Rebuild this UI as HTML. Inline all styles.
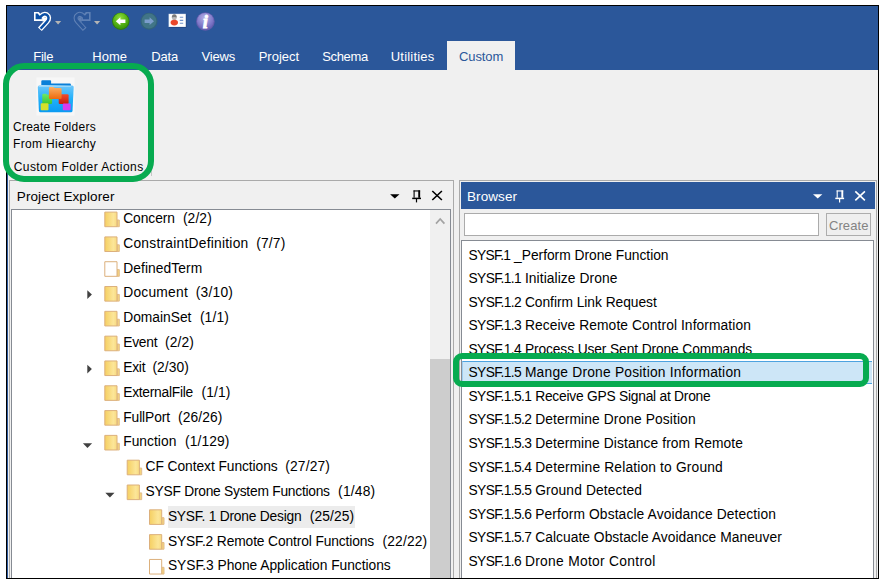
<!DOCTYPE html>
<html><head><meta charset="utf-8"><title>Custom Folder Actions</title>
<style>
html,body{margin:0;padding:0;background:#fff;}
body{width:888px;height:585px;position:relative;overflow:hidden;font-family:"Liberation Sans",sans-serif;}
.a{position:absolute;}
.t{position:absolute;white-space:nowrap;line-height:0;font-family:"Liberation Sans",sans-serif;}
.s{display:inline-block;width:0;height:20px;}
.sp{font-size:0;letter-spacing:0;}
svg{position:absolute;left:0;top:0;}
</style></head><body>
<!-- window frame -->
<div class="a" style="left:6px;top:5px;width:873px;height:574px;box-sizing:border-box;border:1px solid #000;background:#f0f0f0"></div>
<div class="a" style="left:7px;top:6px;width:871px;height:64px;background:#2b579a"></div>
<div class="a" style="left:7px;top:70px;width:1px;height:508px;background:#2b579a"></div>
<!-- custom tab -->
<div class="a" style="left:447px;top:41px;width:68px;height:29px;background:#f0f0f0"></div>
<!-- project explorer panel -->
<div class="a" style="left:9px;top:180px;width:445px;height:398px;box-sizing:border-box;border:1px solid #aaaaaa;border-bottom:none;background:#f0f0f0"></div>
<div class="a" style="left:11px;top:209px;width:440px;height:369px;box-sizing:border-box;border:1px solid #868b93;border-bottom:none;background:#fff"></div>
<div class="a" style="left:430px;top:210px;width:20px;height:368px;background:#f0f0f0"></div>
<div class="a" style="left:430px;top:359px;width:20px;height:219px;background:#cdcdcd"></div>
<!-- browser panel -->
<div class="a" style="left:459px;top:180px;width:418px;height:398px;box-sizing:border-box;border:1px solid #aaaaaa;border-bottom:none;background:#f0f0f0"></div>
<div class="a" style="left:461px;top:182px;width:414px;height:27px;background:#2b579a"></div>
<div class="a" style="left:464px;top:213px;width:355px;height:23px;box-sizing:border-box;border:1px solid #ababab;background:#fff"></div>
<div class="a" style="left:826px;top:213px;width:45px;height:23px;box-sizing:border-box;border:1px solid #adadad;background:#efefef"></div>
<div class="a" style="left:461px;top:240px;width:413px;height:338px;box-sizing:border-box;border:1px solid #868b93;border-bottom:none;background:#fff"></div>
<!-- selected list row -->
<div class="a" style="left:462px;top:361px;width:410px;height:23px;box-sizing:border-box;border:1px solid #4da3e0;border-left-color:#9ccdf0;border-right:none;background:#cde6f7"></div>
<div class="a" style="left:168px;top:506px;width:187px;height:22px;background:#ececec"></div>
<svg width="888" height="585" viewBox="0 0 888 585">
<defs>
<linearGradient id="fg" x1="0" y1="0" x2="1" y2="0"><stop offset="0" stop-color="#f5cf62"/><stop offset="0.7" stop-color="#fce699"/><stop offset="1" stop-color="#f8da80"/></linearGradient>
<radialGradient id="gg" cx="0.45" cy="0.3" r="0.8"><stop offset="0" stop-color="#8fdc3a"/><stop offset="0.6" stop-color="#4fae12"/><stop offset="1" stop-color="#2f8a0a"/></radialGradient>
<radialGradient id="pg" cx="0.45" cy="0.3" r="0.8"><stop offset="0" stop-color="#b5b0e6"/><stop offset="0.6" stop-color="#7f78c8"/><stop offset="1" stop-color="#5a54a8"/></radialGradient>
<linearGradient id="bf" x1="0" y1="0" x2="0" y2="1"><stop offset="0" stop-color="#6cc6fb"/><stop offset="0.5" stop-color="#22b0fa"/><stop offset="1" stop-color="#0a9bf2"/></linearGradient>
<linearGradient id="gf" x1="0" y1="0" x2="0" y2="1"><stop offset="0" stop-color="#6ee868"/><stop offset="1" stop-color="#3cc634"/></linearGradient>
<linearGradient id="rf" x1="0" y1="0" x2="0" y2="1"><stop offset="0" stop-color="#f24e2c"/><stop offset="1" stop-color="#c81d10"/></linearGradient>
<linearGradient id="of" x1="0" y1="0" x2="0" y2="1"><stop offset="0" stop-color="#fbb066"/><stop offset="1" stop-color="#ee6a0e"/></linearGradient>
</defs>
<g><path d="M39.9 29.35 L47.0 21.6 C49.2 19.2 49.0 16.2 46.8 14.9 C44.8 13.8 42.6 14.6 41.0 16.4" fill="none" stroke="#ffffff" stroke-width="5.2" stroke-linecap="butt" stroke-linejoin="round"/><path d="M34.0 12.0 L38.7 12.0 L42.9 16.8 L42.9 20.9 L34.0 20.9 Z" fill="#ffffff"/><path d="M43.0 17.0 L46.4 17.4 L45.6 20.4 L42.6 21.8 Z" fill="#ffffff"/><path d="M40.6 28.6 L47.0 21.6 C49.2 19.2 49.0 16.2 46.8 14.9 C44.8 13.8 42.6 14.6 41.0 16.4 L40.2 17.4" fill="none" stroke="#0a4fa6" stroke-width="2.5" stroke-linecap="butt" stroke-linejoin="round"/><path d="M35.6 13.4 L37.6 13.4 L41.7 18.0 L41.7 19.3 L35.6 19.3 Z" fill="#0a4fa6"/></g>
<path d="M55 20.9 h6.2 l-3.1 3.6 z" fill="#b4b4b4"/>
<g opacity="0.33" transform="translate(124.6,0) scale(-1,1)"><path d="M39.9 29.35 L47.0 21.6 C49.2 19.2 49.0 16.2 46.8 14.9 C44.8 13.8 42.6 14.6 41.0 16.4" fill="none" stroke="#c9d6ec" stroke-width="5.0" stroke-linecap="butt" stroke-linejoin="round"/><path d="M34.0 12.0 L38.7 12.0 L42.9 16.8 L42.9 20.9 L34.0 20.9 Z" fill="#c9d6ec"/><path d="M43.0 17.0 L46.4 17.4 L45.6 20.4 L42.6 21.8 Z" fill="#c9d6ec"/><path d="M40.6 28.6 L47.0 21.6 C49.2 19.2 49.0 16.2 46.8 14.9 C44.8 13.8 42.6 14.6 41.0 16.4 L40.2 17.4" fill="none" stroke="#2b579a" stroke-width="2.9" stroke-linecap="butt" stroke-linejoin="round"/><path d="M35.6 13.4 L37.6 13.4 L41.7 18.0 L41.7 19.3 L35.6 19.3 Z" fill="#2b579a"/></g>
<path d="M94 20.9 h6.2 l-3.1 3.6 z" fill="#b4b4b4"/>
<circle cx="120.8" cy="21.2" r="8.7" fill="#2e7d0c"/>
<circle cx="120.8" cy="21.0" r="7.9" fill="url(#gg)"/>
<path d="M115.8 21.2 l4.6-4 v2.3 h5.0 v3.4 h-5.0 v2.3 z" fill="#fff"/>
<circle cx="149" cy="21.2" r="8.5" fill="#33637a"/>
<circle cx="149" cy="21.0" r="7.4" fill="#417587"/>
<path d="M154 21.2 l-4.4-3.9 v2.2 h-5.0 v3.4 h5.0 v2.2 z" fill="#7b9dcc"/>
<rect x="169.4" y="14.6" width="17.0" height="13.0" fill="#1f3f78"/><rect x="168.6" y="13.8" width="17.2" height="13.2" fill="#dfe5ee"/>
<rect x="169.1" y="14.3" width="16.2" height="12.0" fill="#fdfdfd"/>
<circle cx="174.3" cy="17.9" r="2.4" fill="#b9b9b9"/><path d="M171.7 17.6 q0.2-3.4 2.6-3.4 q2.4 0 2.6 3.4 q-2.6-1.2-5.2 0 z" fill="#7a7a7a"/><ellipse cx="174.3" cy="22.6" rx="3.7" ry="2.8" fill="#e8472b"/>
<path d="M179.8 17.2 h3.4 M179.8 20.4 h3.4 M179.8 23.2 h3.4" stroke="#6f93cc" stroke-width="1.1"/>
<circle cx="205.4" cy="21.5" r="9.3" fill="#625bab"/>
<circle cx="205.4" cy="21.3" r="8.4" fill="url(#pg)"/>
<text x="205.3" y="27.8" font-family="Liberation Serif, serif" font-style="italic" font-weight="bold" font-size="18.5" fill="#fff" stroke="#fff" stroke-width="0.8" text-anchor="middle">i</text>
<rect x="36.5" y="77.5" width="38" height="38" fill="#f7f7f7"/>
<path d="M41.3 85 v-3.8 q0-1 1-1 h7.8 q1 0 1 1 v2.4 h18.8 q1 0 1 1 v1.4 z" fill="#0a7fd8"/>
<path d="M37.8 87 q0-1.5 1.5-1.5 h32.9 q1.5 0 1.5 1.5 l-1.2 23.7 q-0.1 1.5-1.6 1.5 h-30.4 q-1.5 0-1.6-1.5 z" fill="url(#bf)"/>
<path d="M38.6 86.3 h32.3" stroke="#a9defc" stroke-width="0.9"/>
<path d="M42.3 95 q0-1.3 1.3-1.3 h2.6 l0.9 1 h3.8 q1.2 0 1.2 1.2 v6.9 q0 1.2-1.2 1.2 h-7.4 q-1.2 0-1.2-1.2 z" fill="url(#gf)"/>
<rect x="58.7" y="94.2" width="9.9" height="9.8" rx="1.1" fill="url(#rf)"/>
<path d="M48.9 88.2 q0-1.3 1.3-1.3 h3.3 l1 1.2 h5.9 q1.2 0 1.2 1.2 v8.5 q0 1.2-1.2 1.2 h-10.3 q-1.2 0-1.2-1.2 z" fill="url(#of)"/>
<rect x="40.7" y="103.2" width="7.8" height="7" rx="0.9" fill="#d4e02c"/>
<rect x="62.8" y="103.6" width="7.8" height="6.6" rx="0.9" fill="#d83cf2"/>
<path d="M390.1 194.3 h9.4 l-4.7 4.1 z" fill="#000"/>
<path d="M413.5 190.95 h6.6" stroke="#000" stroke-width="1.1" fill="none"/><path d="M414.1 190.40 v7.4" stroke="#000" stroke-width="1.1" fill="none"/><path d="M419.2 190.40 v7.4" stroke="#000" stroke-width="1.9" fill="none"/><path d="M412.2 198.40 h8.8" stroke="#000" stroke-width="1.5" fill="none"/><path d="M416.5 199.00 v3.4" stroke="#000" stroke-width="1.2" fill="none"/>
<path d="M432.3 191.0 l9.6 9.0 M441.9 191.0 l-9.6 9.0" stroke="#000" stroke-width="1.6" fill="none"/>
<path d="M436 223.6 l4.2-4.6 l4.2 4.6" stroke="#a3a3a3" stroke-width="1.7" fill="none"/>
<path d="M813.0 194.3 h9.4 l-4.7 4.1 z" fill="#fff"/>
<path d="M836.6 190.95 h6.6" stroke="#fff" stroke-width="1.1" fill="none"/><path d="M837.2 190.40 v7.4" stroke="#fff" stroke-width="1.1" fill="none"/><path d="M842.3 190.40 v7.4" stroke="#fff" stroke-width="1.9" fill="none"/><path d="M835.3 198.40 h8.8" stroke="#fff" stroke-width="1.5" fill="none"/><path d="M839.6 199.00 v3.4" stroke="#fff" stroke-width="1.2" fill="none"/>
<path d="M855.3 191.3 l9.6 9.0 M864.9 191.3 l-9.6 9.0" stroke="#fff" stroke-width="1.6" fill="none"/>
<path d="M117.00 220.00 h2.3 v6.7 h-2.3 z" fill="#f5d47c" stroke="#e2bd8c" stroke-width="1"/><path d="M104.80 212.10 h12.2 v14.6 h-12.2 z" fill="url(#fg)" stroke="#dcb07c" stroke-width="1"/><path d="M117.00 244.81 h2.3 v6.7 h-2.3 z" fill="#f5d47c" stroke="#e2bd8c" stroke-width="1"/><path d="M104.80 236.91 h12.2 v14.6 h-12.2 z" fill="url(#fg)" stroke="#dcb07c" stroke-width="1"/><path d="M117.00 269.62 h2.3 v6.7 h-2.3 z" fill="#f5d47c" stroke="#e2bd8c" stroke-width="1"/><path d="M104.80 261.72 h12.2 v14.6 h-12.2 z" fill="#fff" stroke="#dcb07c" stroke-width="1"/><path d="M117.00 294.43 h2.3 v6.7 h-2.3 z" fill="#f5d47c" stroke="#e2bd8c" stroke-width="1"/><path d="M104.80 286.53 h12.2 v14.6 h-12.2 z" fill="url(#fg)" stroke="#dcb07c" stroke-width="1"/><path d="M87.3 290.2 l4.6 4.4 l-4.6 4.4 z" fill="#404040"/><path d="M117.00 319.24 h2.3 v6.7 h-2.3 z" fill="#f5d47c" stroke="#e2bd8c" stroke-width="1"/><path d="M104.80 311.34 h12.2 v14.6 h-12.2 z" fill="url(#fg)" stroke="#dcb07c" stroke-width="1"/><path d="M117.00 344.05 h2.3 v6.7 h-2.3 z" fill="#f5d47c" stroke="#e2bd8c" stroke-width="1"/><path d="M104.80 336.15 h12.2 v14.6 h-12.2 z" fill="url(#fg)" stroke="#dcb07c" stroke-width="1"/><path d="M117.00 368.86 h2.3 v6.7 h-2.3 z" fill="#f5d47c" stroke="#e2bd8c" stroke-width="1"/><path d="M104.80 360.96 h12.2 v14.6 h-12.2 z" fill="url(#fg)" stroke="#dcb07c" stroke-width="1"/><path d="M87.3 364.7 l4.6 4.4 l-4.6 4.4 z" fill="#404040"/><path d="M117.00 393.67 h2.3 v6.7 h-2.3 z" fill="#f5d47c" stroke="#e2bd8c" stroke-width="1"/><path d="M104.80 385.77 h12.2 v14.6 h-12.2 z" fill="url(#fg)" stroke="#dcb07c" stroke-width="1"/><path d="M117.00 418.48 h2.3 v6.7 h-2.3 z" fill="#f5d47c" stroke="#e2bd8c" stroke-width="1"/><path d="M104.80 410.58 h12.2 v14.6 h-12.2 z" fill="url(#fg)" stroke="#dcb07c" stroke-width="1"/><path d="M117.00 443.29 h2.3 v6.7 h-2.3 z" fill="#f5d47c" stroke="#e2bd8c" stroke-width="1"/><path d="M104.80 435.39 h12.2 v14.6 h-12.2 z" fill="url(#fg)" stroke="#dcb07c" stroke-width="1"/><path d="M82.9 443.2 h9.2 l-4.6 4.8 z" fill="#404040"/><path d="M139.40 468.10 h2.3 v6.7 h-2.3 z" fill="#f5d47c" stroke="#e2bd8c" stroke-width="1"/><path d="M127.20 460.20 h12.2 v14.6 h-12.2 z" fill="url(#fg)" stroke="#dcb07c" stroke-width="1"/><path d="M139.40 492.91 h2.3 v6.7 h-2.3 z" fill="#f5d47c" stroke="#e2bd8c" stroke-width="1"/><path d="M127.20 485.01 h12.2 v14.6 h-12.2 z" fill="url(#fg)" stroke="#dcb07c" stroke-width="1"/><path d="M105.3 492.8 h9.2 l-4.6 4.8 z" fill="#404040"/><path d="M161.70 517.72 h2.3 v6.7 h-2.3 z" fill="#f5d47c" stroke="#e2bd8c" stroke-width="1"/><path d="M149.50 509.82 h12.2 v14.6 h-12.2 z" fill="url(#fg)" stroke="#dcb07c" stroke-width="1"/><path d="M161.70 542.53 h2.3 v6.7 h-2.3 z" fill="#f5d47c" stroke="#e2bd8c" stroke-width="1"/><path d="M149.50 534.63 h12.2 v14.6 h-12.2 z" fill="url(#fg)" stroke="#dcb07c" stroke-width="1"/><path d="M161.70 567.34 h2.3 v6.7 h-2.3 z" fill="#f5d47c" stroke="#e2bd8c" stroke-width="1"/><path d="M149.50 559.44 h12.2 v14.6 h-12.2 z" fill="#fff" stroke="#dcb07c" stroke-width="1"/>
</svg>
<div class="t" style="left:33.3px;top:41px;font-size:13px;color:#fff;"><i class="s"></i><span class="m" style="letter-spacing:-0.263px;">File</span></div>
<div class="t" style="left:92.2px;top:41px;font-size:13px;color:#fff;"><i class="s"></i><span class="m" style="letter-spacing:0.078px;">Home</span></div>
<div class="t" style="left:151.2px;top:41px;font-size:13px;color:#fff;"><i class="s"></i><span class="m" style="letter-spacing:-0.142px;">Data</span></div>
<div class="t" style="left:201.4px;top:41px;font-size:13px;color:#fff;"><i class="s"></i><span class="m" style="letter-spacing:-0.151px;">Views</span></div>
<div class="t" style="left:258.7px;top:41px;font-size:13px;color:#fff;"><i class="s"></i><span class="m" style="letter-spacing:-0.010px;">Project</span></div>
<div class="t" style="left:322.2px;top:41px;font-size:13px;color:#fff;"><i class="s"></i><span class="m" style="letter-spacing:-0.351px;">Schema</span></div>
<div class="t" style="left:390.8px;top:41px;font-size:13px;color:#fff;"><i class="s"></i><span class="m" style="letter-spacing:0.188px;">Utilities</span></div>
<div class="t" style="left:459.0px;top:41px;font-size:13px;color:#2b579a;"><i class="s"></i><span class="m" style="letter-spacing:-0.116px;">Custom</span></div>
<div class="t" style="left:13.0px;top:111px;font-size:12px;color:#000;"><i class="s"></i><span class="m" style="letter-spacing:0.252px;">Create Folders</span></div>
<div class="t" style="left:13.0px;top:128px;font-size:12px;color:#000;"><i class="s"></i><span class="m" style="letter-spacing:0.339px;">From Hiearchy</span></div>
<div class="t" style="left:13.7px;top:151px;font-size:12px;color:#000;"><i class="s"></i><span class="m" style="letter-spacing:0.437px;">Custom Folder Actions</span></div>
<div class="t" style="left:16.8px;top:181px;font-size:13.5px;color:#000;"><i class="s"></i><span class="m" style="letter-spacing:0.103px;">Project Explorer</span></div>
<div class="t" style="left:467.0px;top:181px;font-size:13.5px;color:#fff;"><i class="s"></i><span class="m" style="letter-spacing:0.083px;">Browser</span></div>
<div class="t" style="left:828.9px;top:210px;font-size:13px;color:#838383;"><i class="s"></i><span class="m" style="letter-spacing:0.111px;">Create</span></div>
<div class="t" style="left:123.2px;top:203px;font-size:13.8px;color:#000;"><i class="s"></i><span style="display:inline-block;width:59.7px;"><span class="m" style="letter-spacing:-0.051px;">Concern</span></span><span class="sp"> </span><span class="m" style="letter-spacing:0.125px;">(2/2)</span></div>
<div class="t" style="left:123.2px;top:228px;font-size:13.8px;color:#000;"><i class="s"></i><span style="display:inline-block;width:133.1px;"><span class="m" style="letter-spacing:0.245px;">ConstraintDefinition</span></span><span class="sp"> </span><span class="m" style="letter-spacing:0.145px;">(7/7)</span></div>
<div class="t" style="left:123.2px;top:253px;font-size:13.8px;color:#000;"><i class="s"></i><span class="m" style="letter-spacing:0.089px;">DefinedTerm</span></div>
<div class="t" style="left:123.2px;top:277px;font-size:13.8px;color:#000;"><i class="s"></i><span style="display:inline-block;width:72.6px;"><span class="m" style="letter-spacing:0.239px;">Document</span></span><span class="sp"> </span><span class="m" style="letter-spacing:0.209px;">(3/10)</span></div>
<div class="t" style="left:123.2px;top:302px;font-size:13.8px;color:#000;"><i class="s"></i><span style="display:inline-block;width:76.7px;"><span class="m" style="letter-spacing:-0.007px;">DomainSet</span></span><span class="sp"> </span><span class="m" style="letter-spacing:0.145px;">(1/1)</span></div>
<div class="t" style="left:123.2px;top:327px;font-size:13.8px;color:#000;"><i class="s"></i><span style="display:inline-block;width:41.9px;"><span class="m" style="letter-spacing:-0.236px;">Event</span></span><span class="sp"> </span><span class="m" style="letter-spacing:0.125px;">(2/2)</span></div>
<div class="t" style="left:123.2px;top:352px;font-size:13.8px;color:#000;"><i class="s"></i><span style="display:inline-block;width:29.2px;"><span class="m" style="letter-spacing:-0.225px;">Exit</span></span><span class="sp"> </span><span class="m" style="letter-spacing:0.109px;">(2/30)</span></div>
<div class="t" style="left:123.2px;top:377px;font-size:13.8px;color:#000;"><i class="s"></i><span style="display:inline-block;width:78.4px;"><span class="m" style="letter-spacing:-0.255px;">ExternalFile</span></span><span class="sp"> </span><span class="m" style="letter-spacing:0.125px;">(1/1)</span></div>
<div class="t" style="left:123.2px;top:402px;font-size:13.8px;color:#000;"><i class="s"></i><span style="display:inline-block;width:54.9px;"><span class="m" style="letter-spacing:-0.081px;">FullPort</span></span><span class="sp"> </span><span class="m" style="letter-spacing:0.112px;">(26/26)</span></div>
<div class="t" style="left:123.2px;top:426px;font-size:13.8px;color:#000;"><i class="s"></i><span style="display:inline-block;width:61.9px;"><span class="m" style="letter-spacing:0.035px;">Function</span></span><span class="sp"> </span><span class="m" style="letter-spacing:0.112px;">(1/129)</span></div>
<div class="t" style="left:145.6px;top:451px;font-size:13.8px;color:#000;"><i class="s"></i><span style="display:inline-block;width:139.6px;"><span class="m" style="letter-spacing:-0.071px;">CF Context Functions</span></span><span class="sp"> </span><span class="m" style="letter-spacing:0.169px;">(27/27)</span></div>
<div class="t" style="left:145.6px;top:476px;font-size:13.8px;color:#000;"><i class="s"></i><span style="display:inline-block;width:192.5px;"><span class="m" style="letter-spacing:-0.250px;">SYSF Drone System Functions</span></span><span class="sp"> </span><span class="m" style="letter-spacing:0.192px;">(1/48)</span></div>
<div class="t" style="left:167.9px;top:501px;font-size:13.8px;color:#000;"><i class="s"></i><span style="display:inline-block;width:141.8px;"><span class="m" style="letter-spacing:-0.227px;">SYSF. 1 Drone Design</span></span><span class="sp"> </span><span class="m" style="letter-spacing:0.126px;">(25/25)</span></div>
<div class="t" style="left:167.9px;top:526px;font-size:13.8px;color:#000;"><i class="s"></i><span style="display:inline-block;width:214.5px;"><span class="m" style="letter-spacing:-0.127px;">SYSF.2 Remote Control Functions</span></span><span class="sp"> </span><span class="m" style="letter-spacing:0.183px;">(22/22)</span></div>
<div class="t" style="left:167.9px;top:550px;font-size:13.8px;color:#000;"><i class="s"></i><span class="m" style="letter-spacing:-0.034px;">SYSF.3 Phone Application Functions</span></div>
<div class="t" style="left:468.5px;top:240px;font-size:13.8px;color:#000;"><i class="s"></i><span style="display:inline-block;width:45.6px;"><span class="m" style="letter-spacing:-0.719px;">SYSF.1</span></span><span class="sp"> </span><span class="m" style="letter-spacing:-0.022px;">_Perform Drone Function</span></div>
<div class="t" style="left:468.5px;top:263px;font-size:13.8px;color:#000;"><i class="s"></i><span style="display:inline-block;width:56.4px;"><span class="m" style="letter-spacing:-0.629px;">SYSF.1.1</span></span><span class="sp"> </span><span class="m" style="letter-spacing:0.083px;">Initialize Drone</span></div>
<div class="t" style="left:468.5px;top:287px;font-size:13.8px;color:#000;"><i class="s"></i><span style="display:inline-block;width:56.4px;"><span class="m" style="letter-spacing:-0.629px;">SYSF.1.2</span></span><span class="sp"> </span><span class="m" style="letter-spacing:-0.039px;">Confirm Link Request</span></div>
<div class="t" style="left:468.5px;top:310px;font-size:13.8px;color:#000;"><i class="s"></i><span style="display:inline-block;width:56.4px;"><span class="m" style="letter-spacing:-0.629px;">SYSF.1.3</span></span><span class="sp"> </span><span class="m" style="letter-spacing:0.084px;">Receive Remote Control Information</span></div>
<div class="t" style="left:468.5px;top:334px;font-size:13.8px;color:#000;"><i class="s"></i><span style="display:inline-block;width:56.4px;"><span class="m" style="letter-spacing:-0.629px;">SYSF.1.4</span></span><span class="sp"> </span><span class="m" style="letter-spacing:-0.116px;">Process User Sent Drone Commands</span></div>
<div class="t" style="left:468.5px;top:357px;font-size:13.8px;color:#000;"><i class="s"></i><span style="display:inline-block;width:56.4px;"><span class="m" style="letter-spacing:-0.629px;">SYSF.1.5</span></span><span class="sp"> </span><span class="m" style="letter-spacing:0.216px;">Mange Drone Position Information</span></div>
<div class="t" style="left:468.5px;top:381px;font-size:13.8px;color:#000;"><i class="s"></i><span style="display:inline-block;width:66.7px;"><span class="m" style="letter-spacing:-0.623px;">SYSF.1.5.1</span></span><span class="sp"> </span><span class="m" style="letter-spacing:-0.239px;">Receive GPS Signal at Drone</span></div>
<div class="t" style="left:468.5px;top:404px;font-size:13.8px;color:#000;"><i class="s"></i><span style="display:inline-block;width:66.7px;"><span class="m" style="letter-spacing:-0.623px;">SYSF.1.5.2</span></span><span class="sp"> </span><span class="m" style="letter-spacing:0.105px;">Determine Drone Position</span></div>
<div class="t" style="left:468.5px;top:428px;font-size:13.8px;color:#000;"><i class="s"></i><span style="display:inline-block;width:66.7px;"><span class="m" style="letter-spacing:-0.623px;">SYSF.1.5.3</span></span><span class="sp"> </span><span class="m" style="letter-spacing:0.106px;">Determine Distance from Remote</span></div>
<div class="t" style="left:468.5px;top:452px;font-size:13.8px;color:#000;"><i class="s"></i><span style="display:inline-block;width:66.7px;"><span class="m" style="letter-spacing:-0.623px;">SYSF.1.5.4</span></span><span class="sp"> </span><span class="m" style="letter-spacing:0.157px;">Determine Relation to Ground</span></div>
<div class="t" style="left:468.5px;top:475px;font-size:13.8px;color:#000;"><i class="s"></i><span style="display:inline-block;width:66.7px;"><span class="m" style="letter-spacing:-0.623px;">SYSF.1.5.5</span></span><span class="sp"> </span><span class="m" style="letter-spacing:0.121px;">Ground Detected</span></div>
<div class="t" style="left:468.5px;top:499px;font-size:13.8px;color:#000;"><i class="s"></i><span style="display:inline-block;width:66.7px;"><span class="m" style="letter-spacing:-0.623px;">SYSF.1.5.6</span></span><span class="sp"> </span><span class="m" style="letter-spacing:0.116px;">Perform Obstacle Avoidance Detection</span></div>
<div class="t" style="left:468.5px;top:522px;font-size:13.8px;color:#000;"><i class="s"></i><span style="display:inline-block;width:66.7px;"><span class="m" style="letter-spacing:-0.623px;">SYSF.1.5.7</span></span><span class="sp"> </span><span class="m" style="letter-spacing:0.042px;">Calcuate Obstacle Avoidance Maneuver</span></div>
<div class="t" style="left:468.5px;top:546px;font-size:13.8px;color:#000;"><i class="s"></i><span style="display:inline-block;width:56.4px;"><span class="m" style="letter-spacing:-0.629px;">SYSF.1.6</span></span><span class="sp"> </span><span class="m" style="letter-spacing:0.305px;">Drone Motor Control</span></div>
<div class="a" style="left:151px;top:74px;width:1px;height:102px;background:#c6c6c6"></div>
<!-- annotations -->
<div class="a" style="left:3px;top:63px;width:151px;height:119px;box-sizing:border-box;border:6px solid #07ab50;border-radius:21px"></div>
<div class="a" style="left:453px;top:353px;width:416px;height:34px;box-sizing:border-box;border:6px solid #07ab50;border-radius:9px"></div>
</body></html>
